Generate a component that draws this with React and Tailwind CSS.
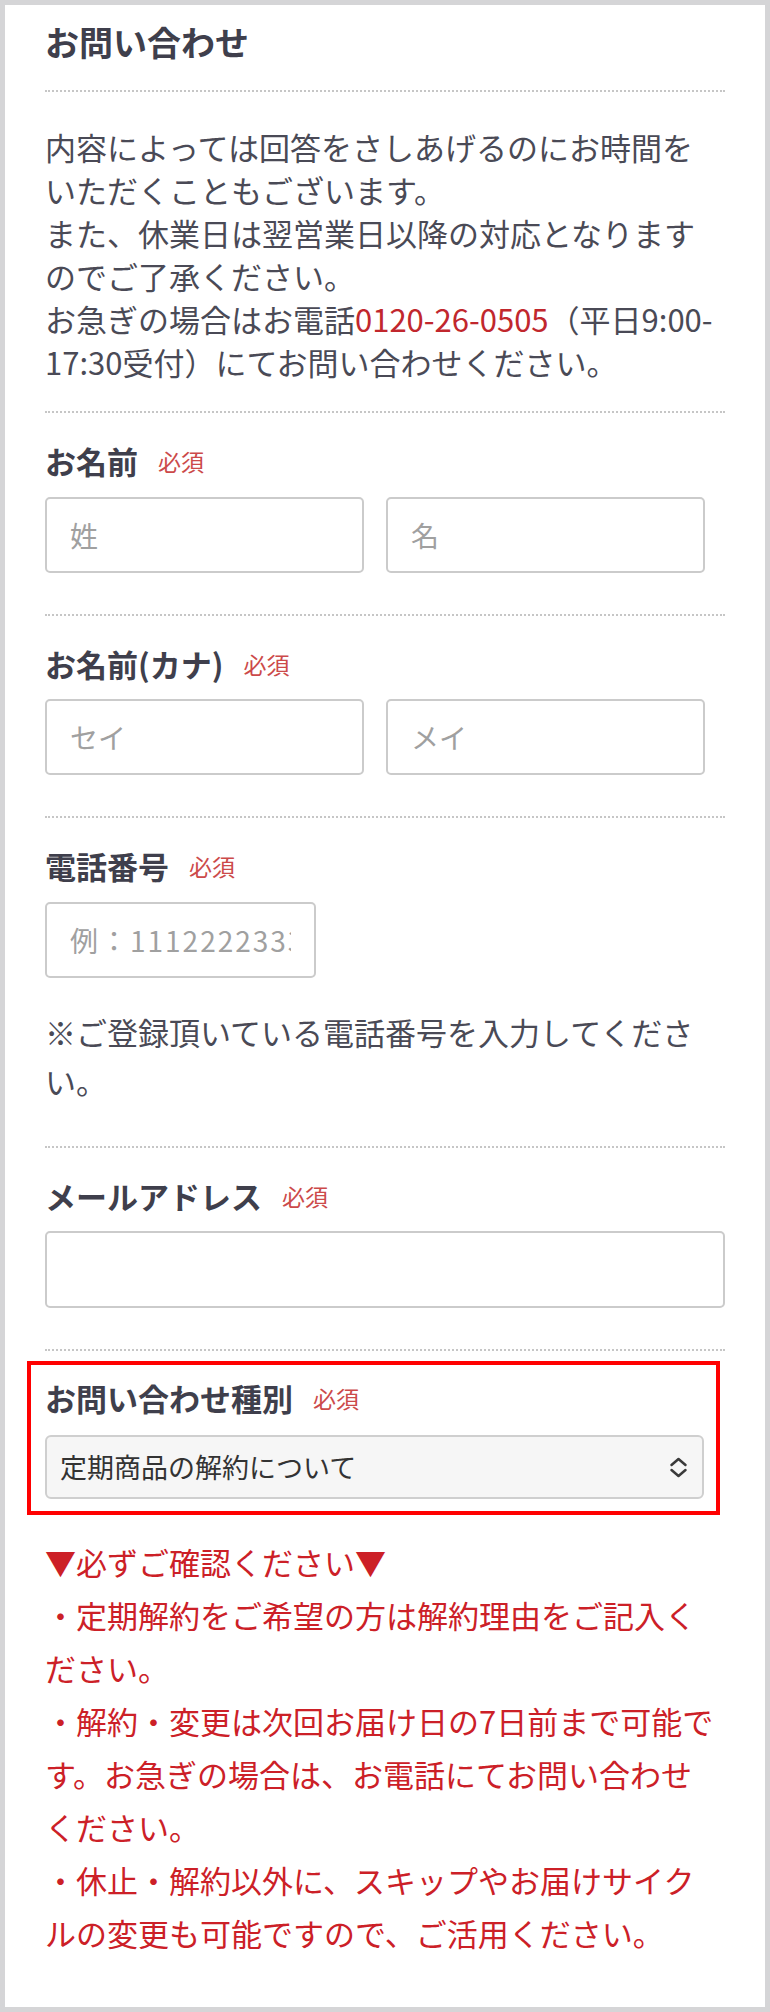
import React from "react";

function Divider({ className = "" }) {
  return <div className={"h-0 border-t-2 border-dotted border-[#c6c6c6] " + className} />;
}

function Label({ children }) {
  return (
    <div className="flex h-[44px] items-center">
      <span className="text-[31px] font-bold text-[#3f3f4c]">{children}</span>
      <span className="ml-[20px] text-[23px] text-[#cc4a4a]">必須</span>
    </div>
  );
}

const inputCls =
  "h-[76px] rounded-[5px] border-2 border-[#cbcbcb] bg-white px-[23px] text-[28px] text-[#333] outline-none placeholder:text-[#a0a0a0]";

function Chevrons() {
  return (
    <svg width="19" height="21" viewBox="0 0 19 21" fill="none" stroke="#3a3a3a" strokeWidth="2.5" strokeLinecap="round" strokeLinejoin="round">
      <path d="M2.5 8 L9.5 2 L16.5 8" />
      <path d="M2.5 13 L9.5 19 L16.5 13" />
    </svg>
  );
}

export default function App() {
  return (
    <div className="flex min-h-[2012px] bg-[#d5d5d7] p-[5px] font-['Noto_Sans_CJK_JP',sans-serif]">
      <div className="flex flex-1 flex-col bg-white px-[40px]">
        <h1 className="pt-[12px] text-[34px] font-bold leading-[50px] text-[#3f3f4c]">お問い合わせ</h1>
        <Divider className="mt-[23px]" />

        <p className="mt-[33px] w-[672px] text-[31px] leading-[43px] text-[#4a4a56]">
          内容によっては回答をさしあげるのにお時間をいただくこともございます。
          <br />
          また、休業日は翌営業日以降の対応となりますのでご了承ください。
          <br />
          お急ぎの場合はお電話<span className="text-[#c1272d]">0120-26-0505</span>（平日9:00-
          <br />
          17:30受付）にてお問い合わせください。
        </p>
        <Divider className="mt-[28px]" />

        <div className="mt-[26px]">
          <Label>お名前</Label>
          <div className="mt-[14px] flex gap-[22px]">
            <input className={inputCls + " w-[319px]"} placeholder="姓" />
            <input className={inputCls + " w-[319px]"} placeholder="名" />
          </div>
        </div>
        <Divider className="mt-[41px]" />

        <div className="mt-[26px]">
          <Label>お名前(カナ)</Label>
          <div className="mt-[13px] flex gap-[22px]">
            <input className={inputCls + " w-[319px]"} placeholder="セイ" />
            <input className={inputCls + " w-[319px]"} placeholder="メイ" />
          </div>
        </div>
        <Divider className="mt-[41px]" />

        <div className="mt-[26px]">
          <Label>電話番号</Label>
          <input className={inputCls + " mt-[14px] w-[271px] tracking-[2px]"} placeholder="例：11122223333" />
          <p className="mt-[29px] w-[672px] text-[31px] leading-[49px] text-[#4a4a56]">
            ※ご登録頂いている電話番号を入力してください。
          </p>
        </div>
        <Divider className="mt-[41px]" />

        <div className="mt-[26px]">
          <Label>メールアドレス</Label>
          <input className={inputCls + " mt-[13px] h-[77px] w-full"} />
        </div>
        <Divider className="mt-[41px]" />

        <div className="ml-[-18px] mt-[10px] w-[693px] border-4 border-[#ff0000] pb-[12px] pl-[14px] pr-[12px] pt-[11px]">
          <Label>お問い合わせ種別</Label>
          <div className="mt-[15px] flex h-[64px] items-center justify-between rounded-[6px] border-2 border-[#cfcfcf] bg-[#f6f6f6] pl-[13px] pr-[14px]">
            <span className="text-[27px] text-[#333333]">定期商品の解約について</span>
            <Chevrons />
          </div>
        </div>

        <div className="mt-[20px] w-[672px] text-[31px] leading-[53px] text-[#cc2027]">
          <p>▼必ずご確認ください▼</p>
          <p>・定期解約をご希望の方は解約理由をご記入ください。</p>
          <p>・解約・変更は次回お届け日の7日前まで可能です。お急ぎの場合は、お電話にてお問い合わせください。</p>
          <p>・休止・解約以外に、スキップやお届けサイクルの変更も可能ですので、ご活用ください。</p>
        </div>
      </div>
    </div>
  );
}
